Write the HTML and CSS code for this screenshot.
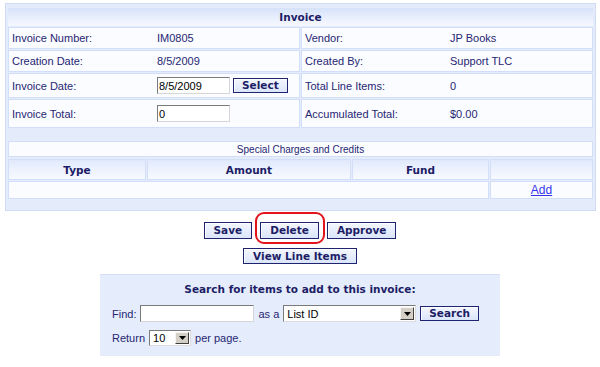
FILE: index.html
```html
<!DOCTYPE html>
<html>
<head>
<meta charset="utf-8">
<link rel="stylesheet" href="styles.css">
</head>
<body>
<div class="panel">
  <div class="caption">Invoice</div>
  <div class="info">
    <div class="cell"><span class="lbl">Invoice Number:</span><span class="val">IM0805</span></div>
    <div class="cell"><span class="lbl">Vendor:</span><span class="val">JP Books</span></div>
    <div class="cell"><span class="lbl">Creation Date:</span><span class="val">8/5/2009</span></div>
    <div class="cell"><span class="lbl">Created By:</span><span class="val">Support TLC</span></div>
    <div class="cell"><span class="lbl">Invoice Date:</span><input class="field" type="text" value="8/5/2009"><button class="btn sm">Select</button></div>
    <div class="cell"><span class="lbl">Total Line Items:</span><span class="val">0</span></div>
    <div class="cell"><span class="lbl">Invoice Total:</span><input class="field" type="text" value="0"></div>
    <div class="cell"><span class="lbl">Accumulated Total:</span><span class="val">$0.00</span></div>
  </div>
  <div class="special">Special Charges and Credits</div>
  <div class="charges">
    <div class="th">Type</div>
    <div class="th">Amount</div>
    <div class="th">Fund</div>
    <div class="th"></div>
    <div class="td wide"></div>
    <div class="td add"><a href="#">Add</a></div>
  </div>
</div>

<div class="actions">
  <div class="btnrow">
    <button class="btn">Save</button>
    <span class="ring"><button class="btn">Delete</button></span>
    <button class="btn">Approve</button>
  </div>
  <div class="btnrow second">
    <button class="btn view">View Line Items</button>
  </div>
</div>

<div class="search">
  <div class="stitle">Search for items to add to this invoice:</div>
  <div class="srow first">
    <span>Find:</span>
    <input class="field find" type="text" value="">
    <span>as a</span>
    <div class="select listid"><span class="txt">List ID</span><span class="arrow"><svg width="7" height="4" viewBox="0 0 7 4"><path d="M0 0H7L3.5 4Z" fill="#000"/></svg></span></div>
    <button class="btn sm">Search</button>
  </div>
  <div class="srow">
    <span>Return</span>
    <div class="select perpage"><span class="txt">10</span><span class="arrow"><svg width="7" height="4" viewBox="0 0 7 4"><path d="M0 0H7L3.5 4Z" fill="#000"/></svg></span></div>
    <span>per page.</span>
  </div>
</div>
</body>
</html>
```

FILE: styles.css
```css
body {
  margin: 0;
  background: #ffffff;
  font-family: "Liberation Sans", Arial, sans-serif;
  font-size: 11px;
  color: #262673;
}

.panel {
  margin: 3px 4px 0 5px;
  border: 1px solid #d0dcf6;
  background: #e4ecfc;
  padding: 4px 2px 11px 2px;
}

.caption {
  height: 18px;
  box-sizing: border-box;
  display: flex;
  align-items: center;
  justify-content: center;
  font: bold 10.5px "DejaVu Sans", Verdana, sans-serif;
  color: #1d1d66;
  background: linear-gradient(#d6e2fa, #e9effd 55%, #f6f8ff);
  margin-bottom: 1px;
}

.info {
  display: grid;
  grid-template-columns: 1fr 1fr;
  grid-template-rows: 22px 22px 25px 29px;
  gap: 1px;
}

.cell {
  background: #fbfcff;
  border: 1px solid #d3dff9;
  display: flex;
  align-items: center;
  padding-left: 3px;
}

.lbl {
  width: 145px;
  flex: none;
}

.field {
  width: 73px;
  height: 17px;
  box-sizing: border-box;
  border: 1px solid;
  border-color: #7a7a7a #d6d6d6 #d6d6d6 #7a7a7a;
  background: #fff;
  font: 11px "Liberation Sans", Arial, sans-serif;
  color: #000;
  padding: 0 1px;
  margin: 0;
}

.btn {
  font: bold 10.5px "DejaVu Sans", Verdana, sans-serif;
  color: #1d1d66;
  background: linear-gradient(#f3f6fe, #dbe5fa);
  border: 1px solid #1f2470;
  box-shadow: inset 1px 1px 0 #ffffff;
  height: 17px;
  line-height: 13px;
  padding: 0 9px;
  margin: 0;
  cursor: pointer;
}

.btn.sm {
  height: 15px;
  line-height: 11px;
  padding: 0 8px;
}

.cell .btn.sm {
  margin-left: 3px;
}

.special {
  margin-top: 13px;
  height: 16px;
  box-sizing: border-box;
  background: #fbfcff;
  border: 1px solid #d3dff9;
  display: flex;
  align-items: center;
  justify-content: center;
  font-size: 10px;
}

.charges {
  margin-top: 2px;
  display: grid;
  grid-template-columns: 138px 204px 137px 1fr;
  grid-template-rows: 21px 18px;
  gap: 1px;
}

.th {
  background: linear-gradient(#e0e9fc, #edf2fd 50%, #f7f9ff);
  border: 1px solid #d3dff9;
  display: flex;
  align-items: center;
  justify-content: center;
  font: bold 10.5px "DejaVu Sans", Verdana, sans-serif;
  color: #1d1d66;
}

.td {
  background: #fbfcff;
  border: 1px solid #d3dff9;
}

.wide {
  grid-column: span 3;
}

.add {
  display: flex;
  align-items: center;
  justify-content: center;
}

.add a {
  font-size: 12px;
  color: #3434ee;
}

.actions {
  margin-top: 11px;
}

.btnrow {
  display: flex;
  justify-content: center;
  gap: 8px;
}

.btnrow.second {
  margin-top: 9px;
}

.btn.view {
  height: 16px;
  line-height: 12px;
}

.ring {
  position: relative;
  display: inline-flex;
}

.ring::after {
  content: "";
  position: absolute;
  top: -10px;
  bottom: -5px;
  left: -5px;
  right: -6px;
  border: 2px solid #e3141b;
  border-radius: 9px;
  pointer-events: none;
}

.search {
  width: 400px;
  box-sizing: border-box;
  margin: 10px auto 0;
  background: #e5edfc;
  border-top: 1px solid #d3dff8;
  border-bottom: 1px solid #e3eafa;
  padding: 7px 12px 9px;
}

.stitle {
  text-align: center;
  font: bold 10.5px "DejaVu Sans", Verdana, sans-serif;
  color: #1d1d66;
  line-height: 14px;
}

.srow {
  display: flex;
  align-items: center;
  gap: 4px;
  margin-top: 7px;
  height: 17px;
}

.srow.first {
  margin-top: 9px;
}

.field.find {
  width: 114px;
}

.select {
  display: flex;
  align-items: center;
  height: 17px;
  box-sizing: border-box;
  border: 1px solid;
  border-color: #7a7a7a #dcdcdc #dcdcdc #7a7a7a;
  background: #fff;
  padding-left: 3px;
  color: #000;
}

.select.listid {
  width: 133px;
}

.select.perpage {
  width: 42px;
  height: 16px;
}

.select .txt {
  flex: 1;
}

.select .arrow {
  width: 14px;
  height: 13px;
  box-sizing: border-box;
  background: #d4d0c8;
  border: 1px solid;
  border-color: #f4f4f4 #404040 #404040 #f4f4f4;
  margin-right: 1px;
  display: flex;
  align-items: center;
  justify-content: center;
}

.select.perpage .arrow {
  height: 12px;
}
```
